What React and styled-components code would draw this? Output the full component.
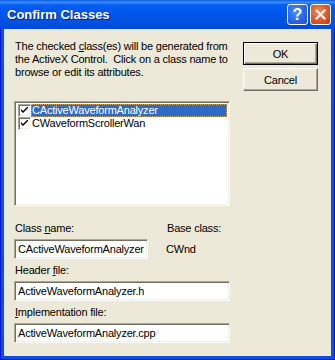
import React from 'react';
import styled, { createGlobalStyle } from 'styled-components';

const colors = {
  face: '#ece9d8',
  shadow: '#aca899',
  dark: '#716f64',
  light: '#f1efe2',
  highlight: '#316ac5',
  frame: '#0b4fe2',
};

const GlobalStyle = createGlobalStyle`
  html, body {
    margin: 0;
    padding: 0;
    background: #fff;
  }
  body {
    font-family: "Liberation Sans", Arial, sans-serif;
    font-size: 11px;
    color: #000;
  }
`;

const Window = styled.div`
  width: 335px;
  height: 360px;
  display: flex;
  flex-direction: column;
`;

const TitleBar = styled.div`
  height: 29px;
  flex-shrink: 0;
  display: flex;
  align-items: center;
  padding: 0 4px 0 7px;
  background: linear-gradient(
    to bottom,
    #0a5ae6 0%,
    #3c8dfb 8%,
    #0762f2 16%,
    #0058ee 30%,
    #0054e3 70%,
    #0049d9 100%
  );
`;

const Title = styled.div`
  flex: 1;
  color: #fff;
  font-weight: bold;
  font-size: 13px;
  text-shadow: 1px 1px 0 #0a1e8a;
`;

const Controls = styled.div`
  display: flex;
  gap: 2px;
`;

const CaptionButton = styled.div`
  width: 21px;
  height: 21px;
  box-sizing: border-box;
  border: 1px solid #fff;
  border-radius: 3px;
  display: flex;
  align-items: center;
  justify-content: center;
  color: #fff;
  font-weight: bold;
  font-size: 16px;
  background: ${p =>
    p.$close
      ? 'radial-gradient(circle at 40% 35%, #f08a62 0%, #e0572c 55%, #c23b14 100%)'
      : 'radial-gradient(circle at 40% 35%, #4d8ef7 0%, #2a66e8 55%, #1e4fd0 100%)'};
`;

const Frame = styled.div`
  flex: 1;
  display: flex;
  padding: 0 3px 3px;
  background: ${colors.frame};
  border: 1px solid #0019cf;
  border-top: none;
`;

const Client = styled.div`
  flex: 1;
  display: flex;
  align-items: flex-start;
  padding: 11px 0 0 10px;
  background: ${colors.face};
  letter-spacing: -0.2px;
`;

const LeftCol = styled.div`
  width: 216px;
  display: flex;
  flex-direction: column;
`;

const Intro = styled.p`
  margin: 0 0 0 1px;
  line-height: 13px;
`;

const sunken = `
  box-sizing: border-box;
  background: #fff;
  border: 1px solid;
  border-color: ${colors.shadow} #fff #fff ${colors.shadow};
  box-shadow: inset 1px 1px 0 ${colors.dark}, inset -1px -1px 0 ${colors.light};
`;

const ListBox = styled.div`
  ${sunken}
  margin-top: 22px;
  height: 105px;
  padding: 2px 2px 2px 3px;
  display: flex;
  flex-direction: column;
`;

const Item = styled.div`
  display: flex;
  align-items: center;
  height: 13px;
`;

const Check = styled.span`
  ${sunken}
  width: 13px;
  height: 13px;
  flex-shrink: 0;
  display: flex;
  align-items: center;
  justify-content: center;
`;

const ItemLabel = styled.span`
  flex: 1;
  height: 13px;
  box-sizing: border-box;
  line-height: 11px;
  white-space: nowrap;
  border: 1px ${p => (p.$focus ? 'dotted #c8a868' : 'solid transparent')};
  background: ${p => (p.$selected ? colors.highlight : 'transparent')};
  color: ${p => (p.$selected ? '#fff' : '#000')};
`;

const FieldRow = styled.div`
  display: flex;
  margin-top: ${p => p.$top || 5}px;
`;

const Field = styled.div`
  display: flex;
  flex-direction: column;
  width: ${p => p.$width || 216}px;
`;

const Label = styled.div`
  margin-left: 1px;
  line-height: 13px;
  margin-bottom: 4px;
  white-space: nowrap;
`;

const Input = styled.div`
  ${sunken}
  height: 20px;
  padding: 0 1px 0 3px;
  display: flex;
  align-items: center;
  white-space: nowrap;
  overflow: hidden;
`;

const BaseInfo = styled.div`
  margin-left: 18px;
  display: flex;
  flex-direction: column;
`;

const BaseValue = styled.div`
  line-height: 20px;
`;

const ButtonCol = styled.div`
  margin: 2px 0 0 13px;
  display: flex;
  flex-direction: column;
  gap: 3px;
`;

const Button = styled.div`
  width: 75px;
  height: 23px;
  box-sizing: border-box;
  display: flex;
  align-items: center;
  justify-content: center;
  background: ${colors.face};
  border: 1px solid;
  border-color: ${p => (p.$default ? '#000' : `#fff ${colors.dark} ${colors.dark} #fff`)};
  box-shadow: ${p =>
    p.$default
      ? `inset 1px 1px 0 #fff, inset -1px -1px 0 ${colors.dark}, inset -2px -2px 0 ${colors.shadow}`
      : `inset -1px -1px 0 ${colors.shadow}, inset 1px 1px 0 ${colors.light}`};
`;

const U = styled.span`
  text-decoration: underline;
`;

function CheckMark() {
  return (
    <svg width="7" height="7" viewBox="0 0 7 7">
      <path d="M0 2 L0 4 L2 6 L7 1 L7 -1 L2 4 Z" fill="#000" />
    </svg>
  );
}

function CloseGlyph() {
  return (
    <svg width="11" height="11" viewBox="0 0 11 11">
      <path d="M1.5 1.5 L9.5 9.5 M9.5 1.5 L1.5 9.5" stroke="#fff" strokeWidth="2.2" strokeLinecap="square" />
    </svg>
  );
}

const classes = [
  { name: 'CActiveWaveformAnalyzer', selected: true },
  { name: 'CWaveformScrollerWan', selected: false },
];

export default function App() {
  return (
    <Window>
      <GlobalStyle />
      <TitleBar>
        <Title>Confirm Classes</Title>
        <Controls>
          <CaptionButton>?</CaptionButton>
          <CaptionButton $close>
            <CloseGlyph />
          </CaptionButton>
        </Controls>
      </TitleBar>
      <Frame>
        <Client>
          <LeftCol>
            <Intro>
              The checked <U>c</U>lass(es) will be generated from the ActiveX
              Control.&nbsp; Click on a class name to browse or edit its
              attributes.
            </Intro>
            <ListBox>
              {classes.map(c => (
                <Item key={c.name}>
                  <Check>
                    <CheckMark />
                  </Check>
                  <ItemLabel $selected={c.selected} $focus={c.selected}>
                    {c.name}
                  </ItemLabel>
                </Item>
              ))}
            </ListBox>
            <FieldRow $top={16}>
              <Field $width={134}>
                <Label>
                  Class <U>n</U>ame:
                </Label>
                <Input>CActiveWaveformAnalyzer</Input>
              </Field>
              <BaseInfo>
                <Label>Base class:</Label>
                <BaseValue>CWnd</BaseValue>
              </BaseInfo>
            </FieldRow>
            <FieldRow>
              <Field>
                <Label>
                  Header <U>f</U>ile:
                </Label>
                <Input>ActiveWaveformAnalyzer.h</Input>
              </Field>
            </FieldRow>
            <FieldRow>
              <Field>
                <Label>
                  <U>I</U>mplementation file:
                </Label>
                <Input>ActiveWaveformAnalyzer.cpp</Input>
              </Field>
            </FieldRow>
          </LeftCol>
          <ButtonCol>
            <Button $default>OK</Button>
            <Button>Cancel</Button>
          </ButtonCol>
        </Client>
      </Frame>
    </Window>
  );
}
